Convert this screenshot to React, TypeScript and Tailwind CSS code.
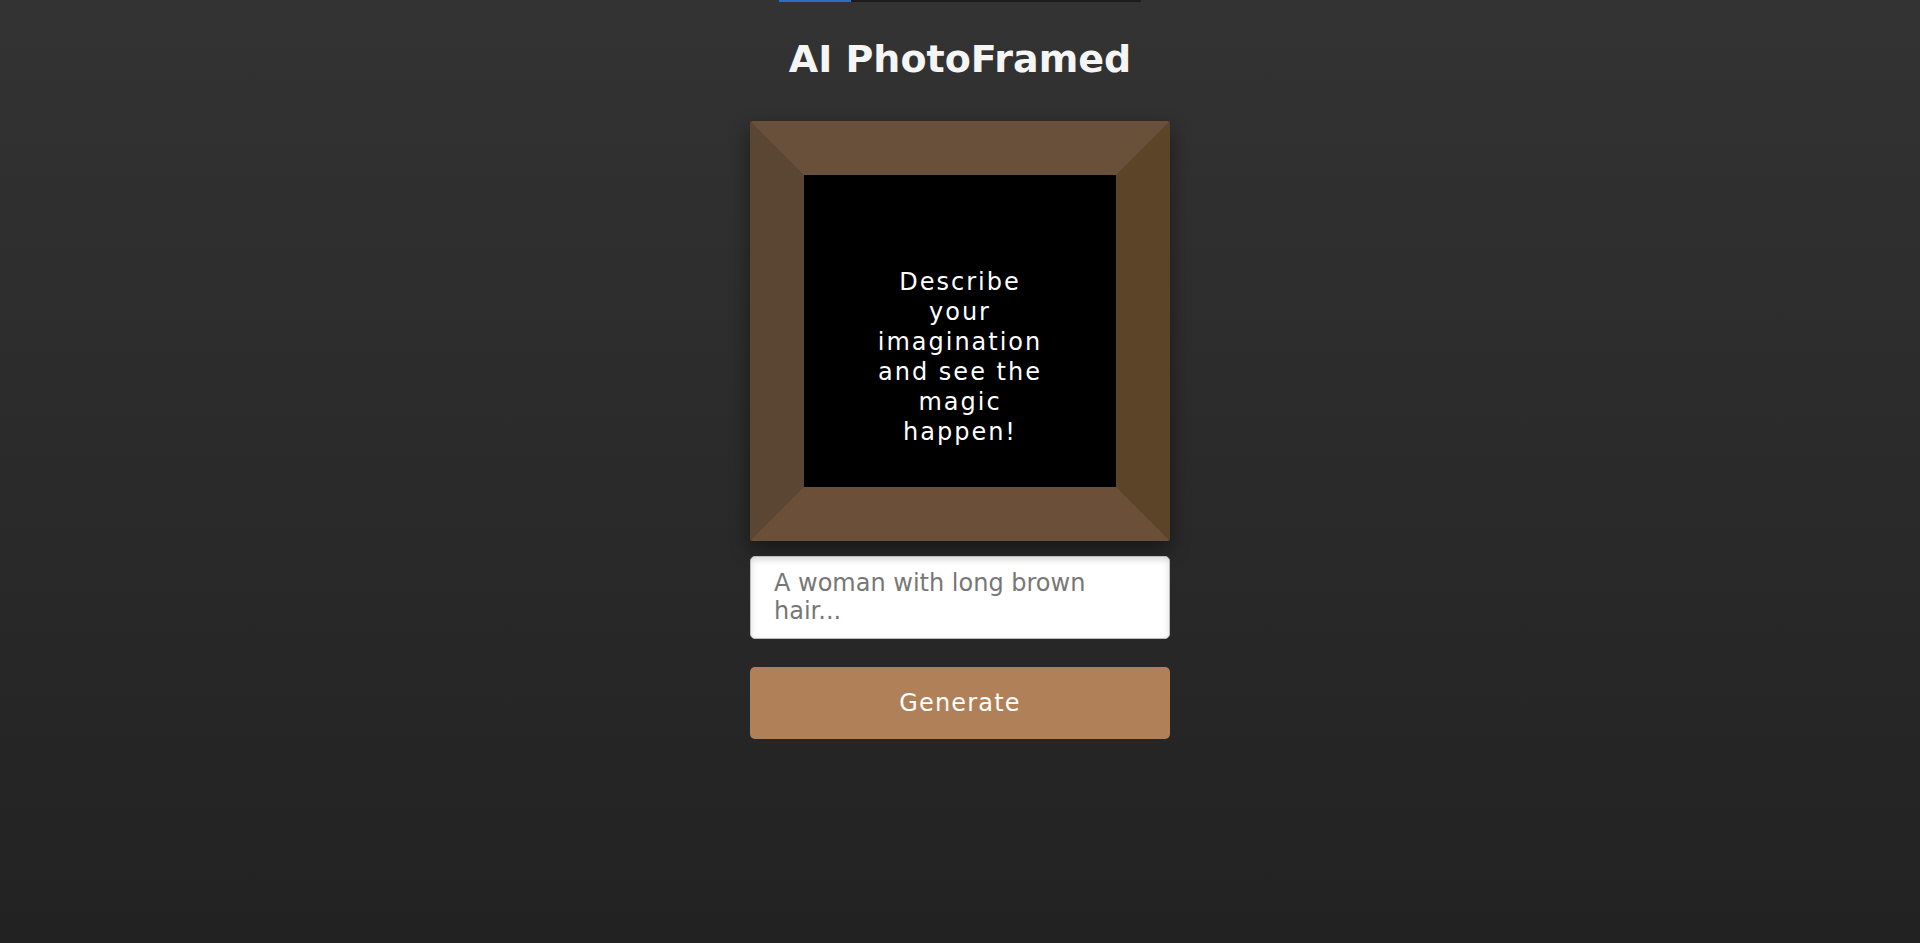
import React from "react";

export default function App() {
  return (
    <div
      className="min-h-screen w-full bg-gradient-to-b from-[#333333] to-[#222222] flex flex-col items-center"
      style={{ fontFamily: '"DejaVu Sans", Verdana, sans-serif' }}
    >
      <div className="w-[362px] h-[2px] bg-[#1c1c1c] flex">
        <div className="w-[72px] h-full bg-[#2e6fc6]" />
      </div>
      <h1 className="mt-[34px] text-[38px] leading-[47px] font-bold text-[#f5f5f5]">
        AI PhotoFramed
      </h1>
      <div className="mt-[38px] w-[420px] h-[420px] rounded-[3px] border-[54px] border-t-[#68503a] border-r-[#5c4429] border-b-[#6c4f38] border-l-[#5a4633] shadow-[0_8px_20px_rgba(0,0,0,0.45)]">
        <div className="w-full h-full bg-black flex items-center justify-center pt-[52px]">
          <p className="max-w-[185px] text-center text-[24px] leading-[30px] tracking-[2px] text-white">
            Describe your imagination and see the magic happen!
          </p>
        </div>
      </div>
      <textarea
        className="mt-[15px] w-[420px] h-[83px] resize-none rounded-[5px] border border-[#bdbdbd] bg-white px-[23px] py-3 text-[24px] leading-[28px] text-[#333] placeholder:text-[#777777] shadow-[inset_0_3px_6px_rgba(0,0,0,0.15)] outline-none"
        style={{ fontFamily: '"DejaVu Sans", Verdana, sans-serif' }}
        placeholder="A woman with long brown hair..."
        rows={2}
      />
      <button
        className="mt-[28px] w-[420px] h-[72px] rounded-[5px] bg-[#b08159] text-white text-[24px] tracking-[1.2px]"
        style={{ fontFamily: '"DejaVu Sans", Verdana, sans-serif' }}
      >
        Generate
      </button>
    </div>
  );
}
